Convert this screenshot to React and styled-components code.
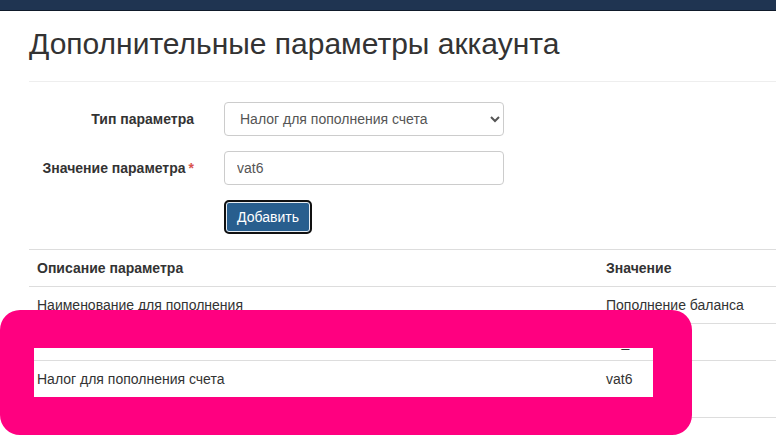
import React from 'react';
import styled, { createGlobalStyle } from 'styled-components';

const GlobalStyle = createGlobalStyle`
  html, body {
    margin: 0;
    padding: 0;
    overflow: hidden;
    background: #fff;
  }

  body {
    font-family: "Liberation Sans", Arial, sans-serif;
    font-size: 14px;
    line-height: 20px;
    color: #333;
  }

  * {
    box-sizing: border-box;
  }
`;

const Navbar = styled.div`
  height: 11px;
  background: #1f3451;
  border-bottom: 1px solid #0f1a2a;
`;

const Container = styled.div`
  position: relative;
  width: 900px;
  padding-left: 29px;
`;

const PageHeader = styled.div`
  margin-top: 15px;
  padding-bottom: 20px;
  border-bottom: 1px solid #eee;

  h1 {
    margin: 0;
    font-size: 30px;
    line-height: 35px;
    font-weight: 400;
    color: #333;
  }
`;

const Form = styled.form`
  display: grid;
  grid-template-columns: 165px 280px;
  column-gap: 30px;
  row-gap: 15px;
  margin-top: 20px;
`;

const Label = styled.label`
  padding-top: 7px;
  text-align: right;
  font-weight: 700;
  line-height: 20px;
`;

const Required = styled.span`
  color: #d9534f;
  margin-left: 3px;
`;

const Select = styled.select`
  height: 34px;
  width: 100%;
  padding: 6px 8px 6px 11px;
  font-family: inherit;
  font-size: 14px;
  color: #555;
  background: #fff;
  border: 1px solid #ccc;
  border-radius: 4px;
`;

const Input = styled.input`
  height: 34px;
  width: 100%;
  padding: 6px 12px;
  font-family: inherit;
  font-size: 14px;
  color: #555;
  border: 1px solid #ccc;
  border-radius: 4px;
`;

const Button = styled.button`
  width: 88px;
  height: 34px;
  padding: 0;
  font-family: inherit;
  font-size: 14px;
  color: #fff;
  background: #285e8e;
  border: 2px solid #111;
  border-radius: 5px;
  box-shadow: inset 0 0 0 1px #e8eef4;
`;

const Table = styled.table`
  width: 100%;
  margin-top: 15px;
  border-collapse: collapse;
  border-bottom: 1px solid #ddd;
`;

const Cell = styled.td`
  padding: ${p => (p.$tall ? '8px 8px 28px' : '8px')};
  vertical-align: top;
  text-align: left;
  line-height: 20px;
  border-top: 1px solid #ddd;
  font-weight: ${p => (p.$head ? 700 : 400)};
  width: ${p => (p.$wide ? '569px' : 'auto')};
`;

const Highlight = styled.div`
  position: absolute;
  left: 0;
  top: 310px;
  width: 692px;
  height: 125px;
  border-style: solid;
  border-color: #ff0080;
  border-width: 38px 39px 38px 34px;
  border-radius: 20px;
  pointer-events: none;
`;

const rows = [
  { name: 'Наименование для пополнения', value: 'Пополнение баланса' },
  { name: 'Налоговая ставка', value: 'no_vat' },
  { name: 'Налог для пополнения счета', value: 'vat6', tall: true },
];

export default function App() {
  return (
    <>
      <GlobalStyle />
      <Navbar />
      <Container>
        <PageHeader>
          <h1>Дополнительные параметры аккаунта</h1>
        </PageHeader>
        <Form onSubmit={e => e.preventDefault()}>
          <Label>Тип параметра</Label>
          <Select defaultValue="vat">
            <option value="name">Наименование для пополнения</option>
            <option value="vat">Налог для пополнения счета</option>
          </Select>
          <Label>
            Значение параметра<Required>*</Required>
          </Label>
          <Input defaultValue="vat6" />
          <span />
          <div>
            <Button type="submit">Добавить</Button>
          </div>
        </Form>
        <Table>
          <thead>
            <tr>
              <Cell as="th" $head $wide>Описание параметра</Cell>
              <Cell as="th" $head>Значение</Cell>
            </tr>
          </thead>
          <tbody>
            {rows.map(row => (
              <tr key={row.name}>
                <Cell $wide $tall={row.tall}>{row.name}</Cell>
                <Cell $tall={row.tall}>{row.value}</Cell>
              </tr>
            ))}
          </tbody>
        </Table>
      </Container>
      <Highlight />
    </>
  );
}
